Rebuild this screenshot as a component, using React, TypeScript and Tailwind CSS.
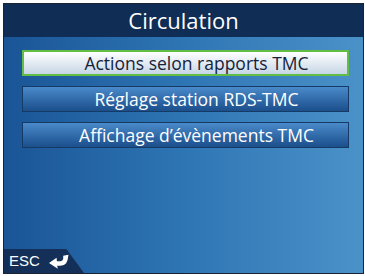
import React from 'react';

const items = [
  { label: 'Actions selon rapports TMC', active: true },
  { label: 'Réglage station RDS-TMC', active: false },
  { label: 'Affichage d’évènements TMC', active: false }];

function ReturnArrow() {
  return (
    <svg width="20" height="15" viewBox="0 0 19 14" className="ml-[9px]">
      <path
        d="M13.5 1.5 L18.5 0.5 Q18 6 16.3 8.7 Q14.7 11 11 11 L7.8 11 L8.3 14 L0 8.5 L7.2 3.5 L7.5 6.8 L10.8 6.8 Q13.2 6.8 13.5 4.5 Z"
        fill="#ffffff" />
    </svg>);

}

export default function App() {
  return (
    <div className="w-[365px] h-[276px] bg-white pt-[3px] pl-[3px]">
      <div
        className="w-[361px] h-[271px] border border-[#1b2230] flex flex-col overflow-hidden"
        style={{ fontFamily: '"Open Sans", "DejaVu Sans", sans-serif' }}>
        
        {/* title bar */}
        <div className="h-[33px] bg-[#0f2d55] flex items-center justify-center text-white text-[22px] pb-[1px]">
          Circulation
        </div>

        {/* body */}
        <div className="flex-1 flex flex-col bg-gradient-to-r from-[#1a5596] via-[#2e75b4] to-[#4b92c9]">
          <div className="flex flex-col gap-[10px] pt-[13px] pl-[18px] pr-[14px]">
            {items.map((item) =>
            item.active ?
            <div
              key={item.label}
              className="h-[26px] border-2 border-[#62bd45] bg-gradient-to-b from-[#ffffff] to-[#c7d6e6] flex items-center justify-center pl-[22px] text-[#15233a] text-[17.5px] font-medium">
              
                  {item.label}
                </div> :

            <div
              key={item.label}
              className="h-[26px] border border-[#163a66] bg-gradient-to-b from-[#4a8acb] to-[#1b4f8c] flex items-center justify-center pl-[22px] text-white text-[17.5px] font-medium">
              
                  {item.label}
                </div>

            )}
          </div>

          <div className="mt-auto flex">
            <div
              className="h-[24px] w-[80px] bg-[#142f58] flex items-center pl-[5px] [clip-path:polygon(0_0,78%_0,100%_100%,0_100%)]"
              style={{ fontFamily: '"Liberation Sans", Arial, sans-serif' }}>
              
              <span className="text-white text-[15px]">ESC</span>
              <ReturnArrow />
            </div>
          </div>
        </div>
      </div>
    </div>);

}
